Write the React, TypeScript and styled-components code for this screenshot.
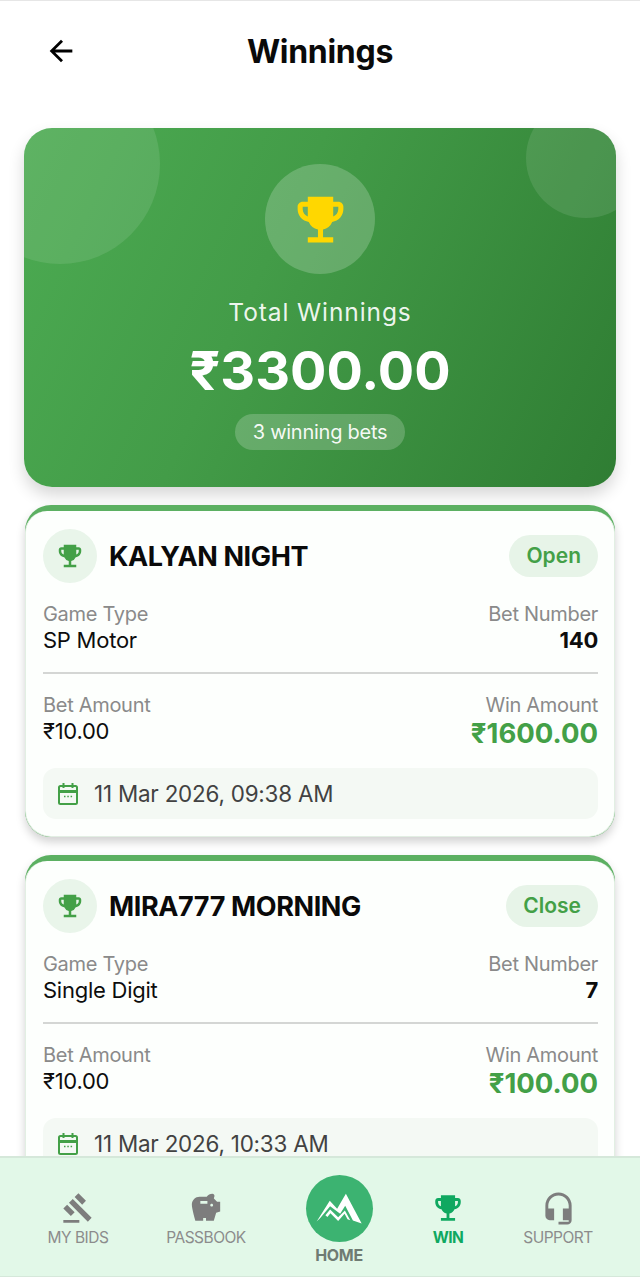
import React from "react";
import styled, { createGlobalStyle } from "styled-components";
import { MdArrowBack, MdEmojiEvents, MdGavel, MdHeadsetMic, MdSavings } from "react-icons/md";

interface Bet {
  name: string;
  session: string;
  gameType: string;
  betNumber: string;
  betAmount: string;
  winAmount: string;
  date: string;
}

const bets: Bet[] = [
  {
    name: "KALYAN NIGHT",
    session: "Open",
    gameType: "SP Motor",
    betNumber: "140",
    betAmount: "₹10.00",
    winAmount: "₹1600.00",
    date: "11 Mar 2026, 09:38 AM",
  },
  {
    name: "MIRA777 MORNING",
    session: "Close",
    gameType: "Single Digit",
    betNumber: "7",
    betAmount: "₹10.00",
    winAmount: "₹100.00",
    date: "11 Mar 2026, 10:33 AM",
  },
];

const GlobalStyle = createGlobalStyle`
  html, body {
    margin: 0;
    padding: 0;
    background: #fff;
  }
  * {
    box-sizing: border-box;
  }
`;

const Screen = styled.div`
  width: 640px;
  height: 1277px;
  display: flex;
  flex-direction: column;
  overflow: hidden;
  background: #fff;
  font-family: Inter, "Noto Sans", sans-serif;
  border-top: 1px solid #e6e6e6;
`;

const Scroll = styled.main`
  flex: 1;
  min-height: 0;
  overflow: hidden;
  padding: 0 24px;
`;

const Header = styled.header`
  height: 127px;
  display: flex;
  align-items: flex-start;
  justify-content: center;
  position: relative;
`;

const BackButton = styled.div`
  position: absolute;
  left: 20px;
  top: 33px;
  color: #000;
  display: flex;
`;

const Title = styled.h1`
  margin: 30px 0 0;
  font-size: 32px;
  line-height: 42px;
  font-weight: 700;
  letter-spacing: -0.3px;
  color: #0a0a0a;
`;

const HeroWrap = styled.div`
  border-radius: 28px;
  box-shadow: 0 8px 16px rgba(0, 0, 0, 0.16);
`;

const Hero = styled.section`
  position: relative;
  height: 359px;
  border-radius: 28px;
  overflow: hidden;
  display: flex;
  flex-direction: column;
  align-items: center;
  padding-top: 36px;
  background: linear-gradient(115deg, #4cab52 0%, #439c48 40%, #2f7d33 100%);
  color: #fff;
`;

const Bubble = styled.div<{ $side: "left" | "right" }>`
  position: absolute;
  border-radius: 50%;
  background: rgba(255, 255, 255, 0.1);
  ${({ $side }) =>
    $side === "left"
      ? "width: 200px; height: 200px; left: -64px; top: -64px;"
      : "width: 120px; height: 120px; right: -30px; top: -30px;"}
`;

const HeroIcon = styled.div`
  width: 110px;
  height: 110px;
  border-radius: 50%;
  background: rgba(255, 255, 255, 0.2);
  display: flex;
  align-items: center;
  justify-content: center;
  color: #ffd700;
`;

const HeroLabel = styled.div`
  margin-top: 22px;
  font-size: 24.5px;
  line-height: 32px;
  letter-spacing: 0.9px;
  color: rgba(255, 255, 255, 0.92);
`;

const HeroAmount = styled.div`
  margin-top: 13px;
  font-size: 54px;
  line-height: 60px;
  font-weight: 700;
  letter-spacing: 0;
`;

const HeroPill = styled.div`
  margin-top: 13px;
  height: 36px;
  padding: 0 18px;
  border-radius: 18px;
  background: rgba(255, 255, 255, 0.2);
  font-size: 20px;
  line-height: 36px;
  letter-spacing: -0.25px;
  color: rgba(255, 255, 255, 0.95);
`;

const Card = styled.article`
  margin: 18px 1px 0;
  height: 332px;
  border-radius: 26px;
  background: #5cb062;
  padding-top: 6px;
  box-shadow: 0 5px 10px rgba(0, 0, 0, 0.18);
  overflow: hidden;
  & + & {
    margin-top: 18px;
  }
`;

const CardBody = styled.div`
  height: 100%;
  padding: 18px 16px 0 17px;
  background: #fdfffd;
  border-radius: 22px 22px 26px 26px;
  border: 1px solid #e2efe3;
  border-top: none;
`;

const CardHead = styled.div`
  display: flex;
  align-items: center;
`;

const CardIcon = styled.div`
  width: 54px;
  height: 54px;
  flex: none;
  border-radius: 50%;
  background: #e9f5ea;
  color: #43a047;
  display: flex;
  align-items: center;
  justify-content: center;
`;

const CardName = styled.div`
  margin-left: 12px;
  flex: 1;
  font-size: 27px;
  font-weight: 700;
  letter-spacing: -0.4px;
  color: #0a0a0a;
`;

const SessionPill = styled.div`
  height: 42px;
  padding: 0 17px;
  border-radius: 21px;
  background: #e7f4e8;
  color: #43a047;
  font-size: 21px;
  font-weight: 600;
  line-height: 42px;
`;

const InfoRow = styled.div`
  display: flex;
  justify-content: space-between;
`;

const TopRow = styled(InfoRow)`
  margin-top: 18px;
  padding-bottom: 18px;
  border-bottom: 2px solid #d4d6d4;
`;

const BottomRow = styled(InfoRow)`
  margin-top: 18px;
`;

const InfoCol = styled.div<{ $right?: boolean }>`
  display: flex;
  flex-direction: column;
  align-items: ${({ $right }) => ($right ? "flex-end" : "flex-start")};
`;

const InfoLabel = styled.div`
  font-size: 20px;
  line-height: 26px;
  letter-spacing: -0.3px;
  color: #8a8a8a;
`;

const InfoValue = styled.div<{ $bold?: boolean }>`
  font-size: 22px;
  line-height: 27px;
  letter-spacing: -0.25px;
  font-weight: ${({ $bold }) => ($bold ? 700 : 400)};
  color: #0d0d0d;
`;

const WinValue = styled.div`
  font-size: 27.5px;
  line-height: 30px;
  font-weight: 700;
  color: #43a047;
`;

const DateBox = styled.div`
  margin-top: 20px;
  height: 51px;
  padding: 0 15px;
  border-radius: 13px;
  background: #f4f9f4;
  display: flex;
  align-items: center;
  gap: 14px;
  color: #424242;
  font-size: 22.4px;
  letter-spacing: -0.2px;
`;

const BottomNav = styled.nav`
  flex: none;
  height: 121px;
  display: grid;
  grid-template-columns: 128px 128px 138px 80px 140px;
  padding-left: 14px;
  background: #e2f8e8;
  border-top: 2px solid #d5e8da;
  border-bottom: 1px solid #d5e8da;
`;

const NavItem = styled.div<{ $active?: boolean }>`
  display: flex;
  flex-direction: column;
  align-items: center;
  padding-top: 30px;
  color: ${({ $active }) => ($active ? "#0fa860" : "#7d7d7d")};
`;

const NavIcon = styled.div`
  height: 40px;
  display: flex;
  align-items: center;
  justify-content: center;
`;

const NavLabel = styled.div<{ $active?: boolean }>`
  font-size: 15.5px;
  line-height: 20px;
  letter-spacing: -0.5px;
  font-weight: ${({ $active }) => ($active ? 700 : 400)};
  color: ${({ $active }) => ($active ? "#0fa860" : "#8c8c8c")};
`;

const HomeItem = styled.div`
  display: flex;
  flex-direction: column;
  align-items: center;
  padding-top: 17px;
`;

const HomeCircle = styled.div`
  width: 67px;
  height: 67px;
  border-radius: 50%;
  background: #3cb371;
  display: flex;
  align-items: center;
  justify-content: center;
`;

const HomeLabel = styled.div`
  margin-top: 3px;
  font-size: 16px;
  line-height: 20px;
  font-weight: 700;
  letter-spacing: -0.3px;
  color: #6f7b73;
`;

const CalendarIcon = () => (
  <svg width="22" height="24" viewBox="0 0 22 24" fill="none" stroke="#43a047" strokeWidth="2">
    <rect x="1" y="4" width="18" height="18" rx="1.5" />
    <path d="M1 9.5h18" strokeWidth="3" />
    <path d="M5.5 1v5M14.5 1v5" />
    <path d="M6 14.5h1.5M9.3 14.5h1.5M12.6 14.5h1.5" strokeWidth="1.6" />
  </svg>
);

const MountainLogo = () => (
  <svg width="47" height="33" viewBox="56 62 140 98" fill="#fff">
    <path d="M58 150 L97 88 L119 112 L145 67 L192 156 L166 147 L143 103 L128 127 L98 104 L68 140 Z" />
    <path d="M84 131 L98 114 L122 137 L142 117 L158 146 L150 143 L141 127 L122 148 L99 125 L90 136 Z" />
  </svg>
);

const BetCard = ({ bet }: { bet: Bet }) => (
  <Card>
    <CardBody>
      <CardHead>
        <CardIcon>
          <MdEmojiEvents size={30} />
        </CardIcon>
        <CardName>{bet.name}</CardName>
        <SessionPill>{bet.session}</SessionPill>
      </CardHead>
      <TopRow>
        <InfoCol>
          <InfoLabel>Game Type</InfoLabel>
          <InfoValue>{bet.gameType}</InfoValue>
        </InfoCol>
        <InfoCol $right>
          <InfoLabel>Bet Number</InfoLabel>
          <InfoValue $bold>{bet.betNumber}</InfoValue>
        </InfoCol>
      </TopRow>
      <BottomRow>
        <InfoCol>
          <InfoLabel>Bet Amount</InfoLabel>
          <InfoValue>{bet.betAmount}</InfoValue>
        </InfoCol>
        <InfoCol $right>
          <InfoLabel>Win Amount</InfoLabel>
          <WinValue>{bet.winAmount}</WinValue>
        </InfoCol>
      </BottomRow>
      <DateBox>
        <CalendarIcon />
        {bet.date}
      </DateBox>
    </CardBody>
  </Card>
);

const App = () => (
  <Screen>
    <GlobalStyle />
    <Scroll>
      <Header>
        <BackButton>
          <MdArrowBack size={34} />
        </BackButton>
        <Title>Winnings</Title>
      </Header>
      <HeroWrap>
        <Hero>
          <Bubble $side="left" />
          <Bubble $side="right" />
          <HeroIcon>
            <MdEmojiEvents size={61} />
          </HeroIcon>
          <HeroLabel>Total Winnings</HeroLabel>
          <HeroAmount>₹3300.00</HeroAmount>
          <HeroPill>3 winning bets</HeroPill>
        </Hero>
      </HeroWrap>
      {bets.map((bet) => (
        <BetCard key={bet.name} bet={bet} />
      ))}
    </Scroll>
    <BottomNav>
      <NavItem>
        <NavIcon>
          <MdGavel size={32} />
        </NavIcon>
        <NavLabel>MY BIDS</NavLabel>
      </NavItem>
      <NavItem>
        <NavIcon>
          <MdSavings size={34} />
        </NavIcon>
        <NavLabel>PASSBOOK</NavLabel>
      </NavItem>
      <HomeItem>
        <HomeCircle>
          <MountainLogo />
        </HomeCircle>
        <HomeLabel>HOME</HomeLabel>
      </HomeItem>
      <NavItem $active>
        <NavIcon>
          <MdEmojiEvents size={34} />
        </NavIcon>
        <NavLabel $active>WIN</NavLabel>
      </NavItem>
      <NavItem>
        <NavIcon>
          <MdHeadsetMic size={35} />
        </NavIcon>
        <NavLabel>SUPPORT</NavLabel>
      </NavItem>
    </BottomNav>
  </Screen>
);

export default App;
